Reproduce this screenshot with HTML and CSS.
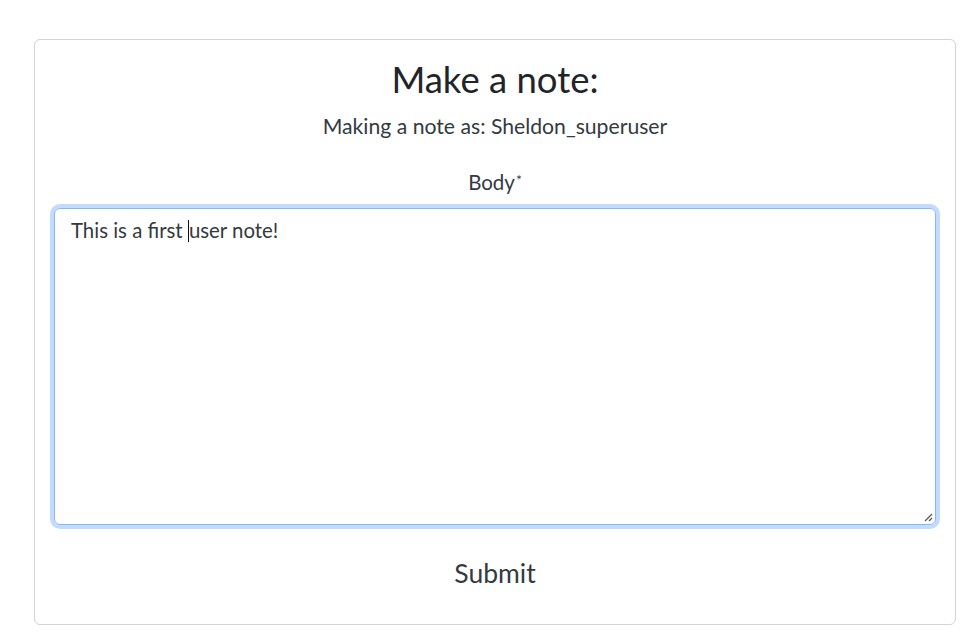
FILE: index.html
```html
<!DOCTYPE html>
<html>
<head>
<meta charset="utf-8">
<link rel="stylesheet" href="styles.css">
</head>
<body>
<div class="page">
  <form class="card">
    <h1 class="title">Make a note:</h1>
    <p class="lead">Making a note as: Sheldon_superuser</p>
    <label class="label">Body<span class="req">*</span></label>
    <div class="textarea">
      <span>This is a first </span><span class="caret"></span><span>user note!</span>
      <svg class="grip" width="10" height="10" viewBox="0 0 10 10"><path d="M9 2 L2 9 M9 6 L6 9" stroke="#555" stroke-width="1.2" fill="none"/></svg>
    </div>
    <button type="button" class="submit">Submit</button>
  </form>
</div>
</body>
</html>
```

FILE: styles.css
```css
* { box-sizing: border-box; }
html, body { margin: 0; background: #fff; }
body {
  font-family: "Lato", "Open Sans", sans-serif;
  color: #212529;
}
.page {
  padding: 39px 14px 0 34px;
}
.card {
  border: 1px solid #d3d3d3;
  border-radius: 6px;
  height: 586px;
  padding: 17px 19px 0 19px;
  display: flex;
  flex-direction: column;
  align-items: center;
}
.title {
  margin: 0;
  font-weight: 400;
  font-size: 36.5px;
  line-height: 44px;
}
.lead {
  margin: 11px 0 0;
  font-size: 21.2px;
  line-height: 28px;
  color: #343a40;
}
.label {
  margin-top: 30px;
  font-size: 20.5px;
  line-height: 24px;
  color: #343a40;
}
.req { font-size: 14px; vertical-align: top; position: relative; top: -2px; margin-left: 1px; }
.textarea {
  position: relative;
  align-self: stretch;
  margin-top: 14px;
  height: 317px;
  border: 1px solid #86b7fe;
  border-radius: 6px;
  box-shadow: 0 0 0 4px rgba(13, 110, 253, 0.25);
  padding: 8px 16px;
  font-size: 20.4px;
  line-height: 26px;
  color: #343a40;
}
.caret {
  display: inline-block;
  width: 1px;
  height: 22px;
  background: #111;
  vertical-align: -4px;
}
.grip {
  position: absolute;
  right: 2px;
  bottom: 2px;
}
.submit {
  margin-top: 32px;
  background: none;
  border: 0;
  font-family: inherit;
  font-size: 26.5px;
  line-height: 32px;
  color: #343a40;
  padding: 0 12px;
}
```
